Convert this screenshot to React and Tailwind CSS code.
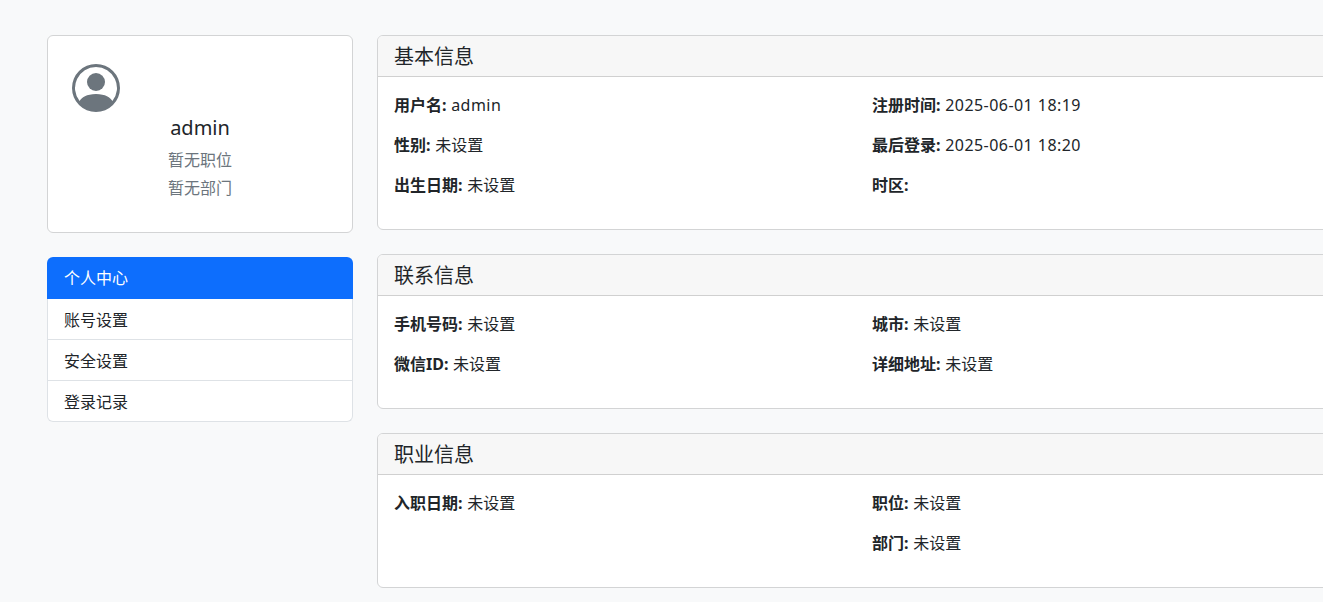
import React from 'react';

const FONT = "font-['Noto_Sans','Noto_Sans_CJK_SC',sans-serif]";

const sections = [
  {
    title: '基本信息',
    left: [['用户名', 'admin'], ['性别', '未设置'], ['出生日期', '未设置']],
    right: [['注册时间', '2025-06-01 18:19'], ['最后登录', '2025-06-01 18:20'], ['时区', '']],
  },
  {
    title: '联系信息',
    left: [['手机号码', '未设置'], ['微信ID', '未设置']],
    right: [['城市', '未设置'], ['详细地址', '未设置']],
  },
  {
    title: '职业信息',
    left: [['入职日期', '未设置']],
    right: [['职位', '未设置'], ['部门', '未设置']],
  },
];

const menu = ['个人中心', '账号设置', '安全设置', '登录记录'];

const Avatar = () => (
  <svg width="48" height="48" viewBox="0 0 16 16" fill="#6c757d">
    <path d="M11 6a3 3 0 1 1-6 0 3 3 0 0 1 6 0z" />
    <path
      fillRule="evenodd"
      d="M0 8a8 8 0 1 1 16 0A8 8 0 0 1 0 8zm8-7a7 7 0 0 0-5.468 11.37C3.242 11.226 4.805 10 8 10s4.757 1.225 5.468 2.37A7 7 0 0 0 8 1z"
    />
  </svg>
);

const Field = ({ label, value }) => (
  <p className="mb-4 h-6 leading-6 whitespace-nowrap [word-spacing:0.5px]">
    <strong className="font-bold">{label}:</strong>{' '}
    <span className={/^[\x00-\x7f]+$/.test(value) ? 'tracking-[0.45px] [word-spacing:0px]' : ''}>{value}</span>
  </p>
);

const InfoCard = ({ title, left, right }) => (
  <div className="mb-6 bg-white border border-[#d3d4d5] rounded-[6px] overflow-hidden">
    <div className="h-[41px] px-4 bg-[#f7f7f7] border-b border-[#d0d0d0] text-[20px] leading-[41px]">{title}</div>
    <div className="p-4 grid grid-cols-2 gap-x-6">
      <div>
        {left.map(([k, v]) => <Field key={k} label={k} value={v} />)}
      </div>
      <div>
        {right.map(([k, v]) => <Field key={k} label={k} value={v} />)}
      </div>
    </div>
  </div>
);

export default function App() {
  return (
    <div className={`${FONT} h-screen overflow-hidden bg-[#f8f9fa] text-[#212529] text-base`}>
      <div className="w-[1320px] ml-[47px] pt-[35px] flex gap-6 items-start">
        <div className="w-[306px] shrink-0">
          <div className="h-[198px] bg-white border border-[#d3d4d5] rounded-[6px] px-6 pt-7 mb-6 text-center">
            <div className="h-[48px] flex">
              <Avatar />
            </div>
            <h5 className="mt-[1px] text-[20px] leading-[30px]">admin</h5>
            <p className="mt-[3px] leading-[28px] text-[#6c757d]">暂无职位</p>
            <p className="leading-[28px] text-[#6c757d]">暂无部门</p>
          </div>
          <div className="bg-white rounded-[6px]">
            {menu.map((m, i) => (
              <div
                key={m}
                className={
                  i === 0
                    ? 'h-[42px] px-[17px] rounded-t-[6px] bg-[#0d6efd] text-white leading-[42px]'
                    : 'h-[41px] px-4 leading-[42px] border-x border-b border-[#dee2e6] last:rounded-b-[6px]'
                }
              >
                {m}
              </div>
            ))}
          </div>
        </div>
        <div className="w-[966px] shrink-0">
          {sections.map((s) => <InfoCard key={s.title} {...s} />)}
        </div>
      </div>
    </div>
  );
}
